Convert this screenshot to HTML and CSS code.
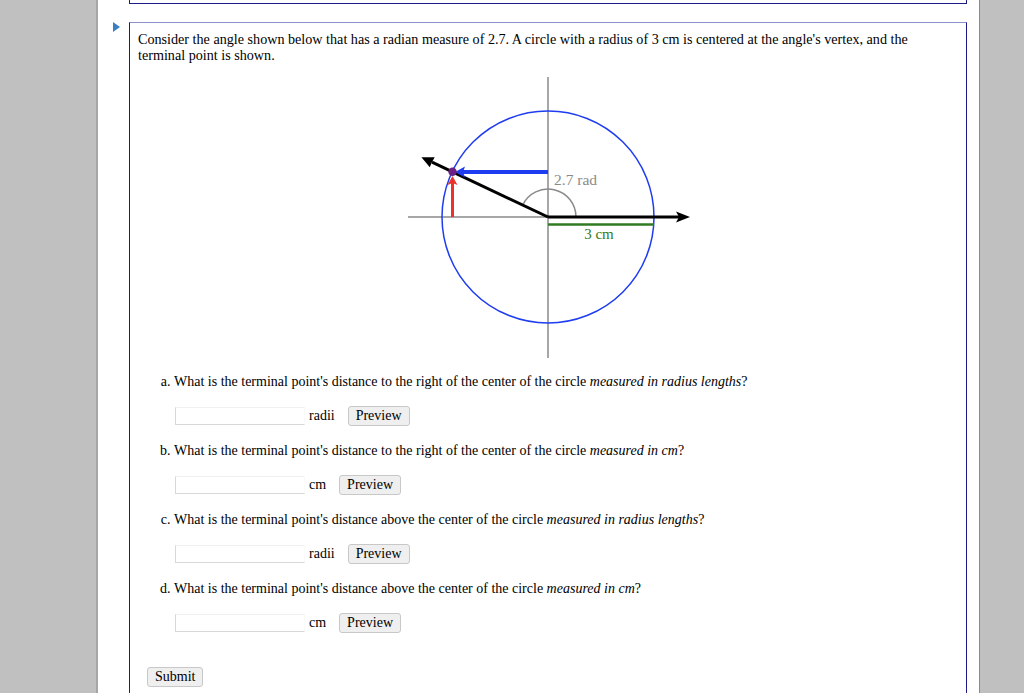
FILE: index.html
```html
<!DOCTYPE html>
<html>
<head>
<meta charset="utf-8">
<link rel="stylesheet" href="styles.css">
</head>
<body>
<div class="page">
  <div class="prev-box"></div>
  <div class="qbox">
    <span class="marker"></span>
    <p class="intro">Consider the angle shown below that has a radian measure of 2.7. A circle with a radius of 3 cm is centered at the angle's vertex, and the terminal point is shown.</p>
    <div class="figure">
      <svg width="300" height="285" viewBox="0 0 300 285">
        <line x1="150" y1="2" x2="150" y2="283" stroke="#8a8a8a" stroke-width="1.5"/>
        <line x1="10" y1="142" x2="285" y2="142" stroke="#8a8a8a" stroke-width="1.5"/>
        <circle cx="150" cy="142" r="106" fill="none" stroke="#1e3cf0" stroke-width="1.5"/>
        <path d="M178,142 A28,28 0 0 0 124.7,130" fill="none" stroke="#8a8a8a" stroke-width="1.5"/>
        <line x1="150" y1="149.5" x2="256" y2="149.5" stroke="#2f7a22" stroke-width="2.5"/>
        <line x1="150" y1="142" x2="281" y2="142" stroke="#000" stroke-width="3"/>
        <polygon points="292,142 278,136.5 281,142 278,147.5" fill="#000"/>
        <line x1="150" y1="142" x2="34" y2="87.2" stroke="#000" stroke-width="3"/>
        <polygon points="23.4,82.2 36.7,82.3 33.6,87.7 31.8,92.3" fill="#000"/>
        <line x1="150" y1="97" x2="64" y2="97" stroke="#1e3cf0" stroke-width="4"/>
        <polygon points="57,97 67,91.5 65,97 67,102.5" fill="#1e3cf0"/>
        <line x1="54.5" y1="142" x2="54.5" y2="108" stroke="#e8322a" stroke-width="3"/>
        <polygon points="54.5,101 49.5,110 54.5,108 59.5,110" fill="#e8322a"/>
        <circle cx="54.5" cy="96.8" r="4.2" fill="#6c1f82"/>
        <text x="156" y="110" class="lbl-rad">2.7 rad</text>
        <text x="201" y="163.5" text-anchor="middle" class="lbl-cm">3 cm</text>
      </svg>
    </div>
    <ol class="parts">
      <li>
        <p class="question">What is the terminal point's distance to the right of the center of the circle <em>measured in radius lengths</em>?</p>
        <div class="answer"><input type="text" class="field"><span class="unit">radii</span><button class="btn">Preview</button></div>
      </li>
      <li>
        <p class="question">What is the terminal point's distance to the right of the center of the circle <em>measured in cm</em>?</p>
        <div class="answer"><input type="text" class="field"><span class="unit">cm</span><button class="btn">Preview</button></div>
      </li>
      <li>
        <p class="question">What is the terminal point's distance above the center of the circle <em>measured in radius lengths</em>?</p>
        <div class="answer"><input type="text" class="field"><span class="unit">radii</span><button class="btn">Preview</button></div>
      </li>
      <li>
        <p class="question">What is the terminal point's distance above the center of the circle <em>measured in cm</em>?</p>
        <div class="answer"><input type="text" class="field"><span class="unit">cm</span><button class="btn">Preview</button></div>
      </li>
    </ol>
    <div class="submit-row"><button class="btn">Submit</button></div>
  </div>
</div>
</body>
</html>
```
FILE: styles.css
```css
html, body {
  margin: 0;
  padding: 0;
  background: #c0c0c0;
  height: 100%;
  overflow: hidden;
}
body {
  font-family: "Liberation Serif", "Times New Roman", serif;
  font-size: 14px;
  color: #000;
}
.page {
  margin-left: 96px;
  width: 850px;
  height: 693px;
  overflow: hidden;
  background: #fff;
  border-left: 2px solid #a6a6a6;
  border-right: 1px solid #8a8a8a;
  padding-left: 31px;
  box-sizing: content-box;
}
.prev-box {
  width: 836px;
  height: 3px;
  border: 1px solid #1c1c8a;
  border-top: none;
}
.qbox {
  position: relative;
  margin-top: 18px;
  width: 820px;
  border: 1px solid #1c1c8a;
  border-top-color: #8e92cc;
  padding: 8px 8px 40px 8px;
}
.marker {
  position: absolute;
  left: -17px;
  top: -1px;
  width: 0;
  height: 0;
  border-top: 5px solid transparent;
  border-bottom: 5px solid transparent;
  border-left: 7px solid #3a7fc4;
}
.intro {
  margin: 0;
  max-width: 800px;
  font-size: 14.15px;
  line-height: 16px;
}
.figure {
  margin-top: 12px;
  text-align: center;
  height: 285px;
}
.figure svg {
  display: block;
  margin: 0 auto;
}
.lbl-rad {
  font-family: "Liberation Serif", serif;
  font-size: 15.5px;
  fill: #8a8a8a;
}
.lbl-cm {
  font-family: "Liberation Serif", serif;
  font-size: 15px;
  fill: #2f7a22;
}
.parts {
  list-style: lower-alpha;
  margin: 14px 0 0 0;
  padding-left: 36px;
}
.parts li {
  margin: 0;
}
.question {
  margin: 0;
  line-height: 15px;
}
.answer {
  display: flex;
  align-items: center;
  margin: 17px 0 17px 1px;
  height: 20px;
}
.field {
  width: 130px;
  height: 18px;
  box-sizing: border-box;
  border: 1px solid;
  border-color: #f0f0f0 #fafafa #d8d8d8 #d8d8d8;
  padding: 0;
  margin: 0 4px 0 0;
  outline: none;
}
.unit {
  margin-right: 13px;
}
.btn {
  font-family: "Liberation Serif", "Times New Roman", serif;
  font-size: 14px;
  line-height: 16px;
  padding: 1px 7px;
  background: #efefef;
  border: 1px solid #c8c8c8;
  border-radius: 3px;
  color: #000;
  margin: 0;
}
.submit-row {
  margin: 34px 0 0 9px;
}
```
